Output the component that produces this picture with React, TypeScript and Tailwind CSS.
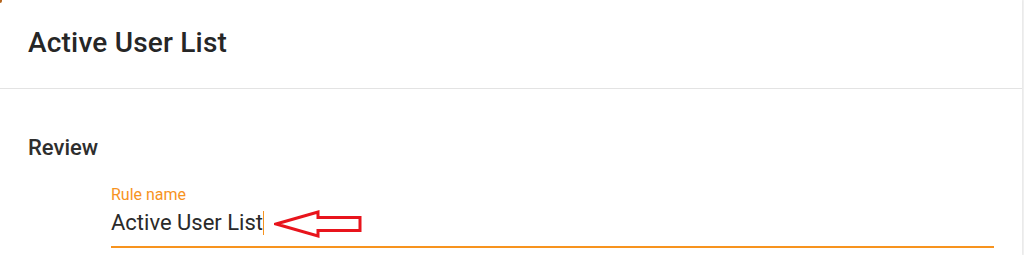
import React from "react"

function RedArrow() {
  return (
    <svg width="90" height="28" viewBox="0 0 90 28" className="ml-[10px]">
      <path
        d="M2 14 L44 2 L44 7.5 L86 7.5 L86 20.5 L44 20.5 L44 26 Z"
        fill="none"
        stroke="#e8141c"
        strokeWidth="3"
        strokeLinejoin="miter"
      />
    </svg>
  )
}

export default function App() {
  return (
    <div className="w-[1024px] h-[255px] bg-[#f4f4f4] overflow-hidden" style={{ fontFamily: "Roboto, 'Liberation Sans', sans-serif" }}>
      <div className="relative w-[1022px] h-full bg-white shadow-[1px_0_2px_rgba(0,0,0,0.06)]">
        <div className="absolute left-0 top-0 w-[2px] h-[3px] bg-[#b5651d] rounded-br" />
        <div className="h-[89px] px-[28px] flex items-center border-b border-[#e3e3e3]">
          <h1 className="text-[28px] font-medium text-[#262626] pb-[2px] tracking-[0.2px]">Active User List</h1>
        </div>
        <div className="pt-[44px] px-[28px]">
          <h2 className="text-[22px] font-medium text-[#2e2e2e] leading-[30px]">Review</h2>
          <div className="ml-[83px] mt-[23px]">
            <div className="text-[16px] text-[#f7931e] leading-[18px]">Rule name</div>
            <div className="flex items-start pt-[6px] h-[44px] border-b-2 border-[#f7931e]">
              <span className="text-[22px] text-[#2a2a2a] leading-[26px]">Active User List</span>
              <span className="w-[1px] h-[24px] bg-[#f7931e] mt-[1px]" />
              <RedArrow />
            </div>
          </div>
        </div>
      </div>
    </div>
  )
}
